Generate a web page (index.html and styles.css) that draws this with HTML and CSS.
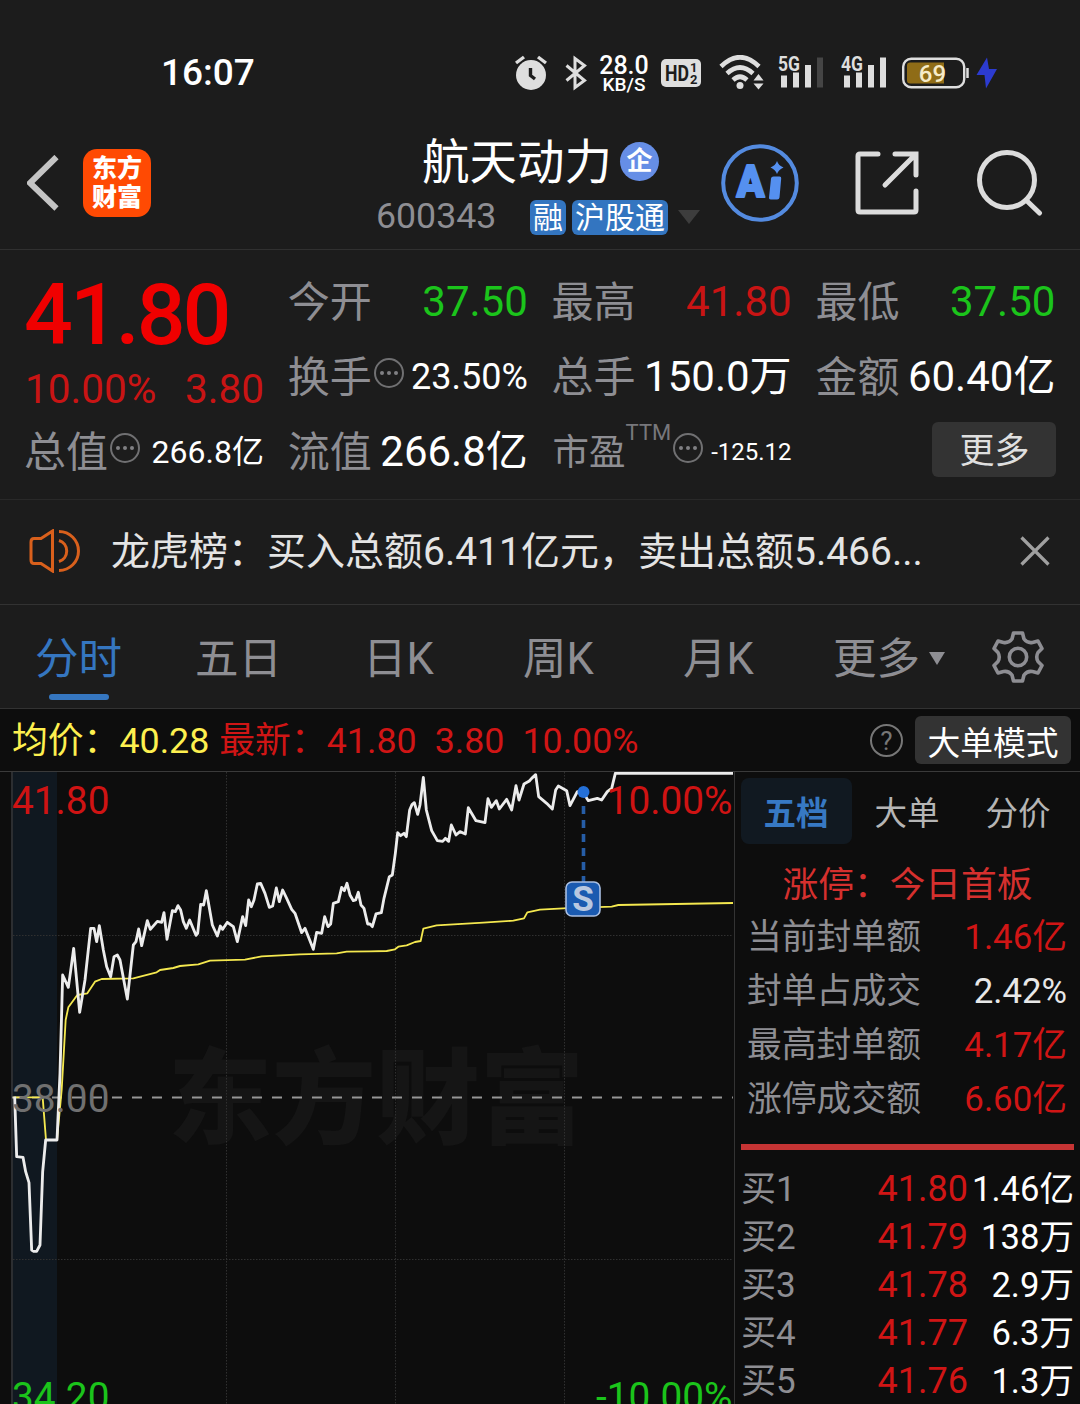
FILE: index.html
```html
<!DOCTYPE html>
<html lang="zh-CN">
<head>
  <meta charset="UTF-8" />
  <meta name="viewport" content="width=device-width, initial-scale=1.0" />
  <title>航天动力 600343</title>
  <link rel="stylesheet" href="styles.css">
</head>
<body>
  <div class="status-bar">
    <span class="time">16:07</span>
    <div class="status-icons">
      <svg class="alarm" width="32" height="36" viewBox="0 0 32 36">
        <circle cx="16" cy="20" r="15" fill="#dedede"/>
        <path d="M1 8 9 2M31 8 23 2" stroke="#dedede" stroke-width="3.4"/>
        <path d="M15.500 13v7.500l4.500 3.500" fill="none" stroke="#1c1c1c" stroke-width="3.400"/>
      </svg>
      <svg class="bluetooth" width="22" height="36" viewBox="0 0 22 36">
        <path d="M1.500 10.500 19.500 25.500 10 32.500V3.500l9.500 7L1.500 25.500" fill="none" stroke="#dedede" stroke-width="3"/>
      </svg>
      <div class="speed"><span>28.0</span><span class="unit">KB/S</span></div>
      <svg class="hd" width="40" height="28" viewBox="0 0 40 28">
        <rect width="40" height="28" rx="5" fill="#dedede"/>
        <text x="4" y="22" font-size="22" textLength="24" lengthAdjust="spacingAndGlyphs">HD</text>
        <text x="29" y="13" font-size="13">1</text>
        <text x="29" y="25" font-size="13">2</text>
      </svg>
      <svg class="wifi" width="46" height="36" viewBox="0 0 46 36">
        <g fill="none" stroke="#dedede" stroke-width="4.600">
          <path d="M2 11.500Q21 -7 40 11.500"/>
          <path d="M8 18.500Q21 6.500 34 18.500"/>
          <path d="M14 25Q21 18.500 28 25"/>
        </g>
        <circle cx="21" cy="30.500" r="3.500" fill="#dedede"/>
        <path d="M34.500 25.500 39.500 19l5 6.500zM34.500 28.500h10l-5 6z" fill="#dedede"/>
      </svg>
      <svg class="signal" width="48" height="36" viewBox="0 0 48 36">
        <text x="1" y="15.500" textLength="22" lengthAdjust="spacingAndGlyphs">5G</text>
        <path d="M4 20.500h6v12H4zM16 17.500h6v15h-6zM28 10h6v22.500h-6z" fill="#dedede"/>
        <path d="M40 2.500h6v30h-6z" fill="#454545"/>
      </svg>
      <svg class="signal" width="48" height="36" viewBox="0 0 48 36">
        <text x="1" y="15.500" textLength="22" lengthAdjust="spacingAndGlyphs">4G</text>
        <path d="M4 20.500h6v12H4zM16 17.500h6v15h-6zM28 10h6v22.500h-6zM40 2.500h6v30h-6z" fill="#dedede"/>
      </svg>
      <svg class="battery" width="95" height="36" viewBox="0 0 95 36">
        <rect x="1.200" y="3.700" width="61" height="28.600" rx="8" fill="none" stroke="#dedede" stroke-width="2.400"/>
        <path d="M8 7.500h34v21H8q-3 0-3-3v-15q0-3 3-3z" fill="#8f6c17"/>
        <path d="M65.500 13v10" stroke="#dedede" stroke-width="2.500"/>
        <text x="30.500" y="26.500" text-anchor="middle">69</text>
        <path d="M85 2.500 74.500 20h8L84 33.500 95 14h-8z" fill="#2c3bd0"/>
      </svg>
    </div>
  </div>

  <div class="header">
    <svg class="back" width="32" height="56" viewBox="0 0 32 56">
      <path d="M29.500 2 3 28l26.500 25.500" fill="none" stroke="#c4c4c4" stroke-width="6"/>
    </svg>
    <div class="logo"><span>东方</span><span>财富</span></div>
    <div class="title">
      <div class="name"><span>航天动力</span><span class="badge">企</span></div>
      <div class="code">
        <span class="number">600343</span>
        <span class="tag">融</span>
        <span class="tag">沪股通</span>
        <i class="caret"></i>
      </div>
    </div>
    <svg class="ai" width="78" height="78" viewBox="0 0 78 78">
      <circle cx="39" cy="39" r="36.800" fill="none" stroke="#548be0" stroke-width="4"/>
      <text x="15.500" y="52.500" class="ai-a" textLength="28" lengthAdjust="spacingAndGlyphs">A</text>
      <path d="M50 34.500q.3-2 2.500-2h6q2 0 1.700 2l-1.700 19q-.3 2-2.300 2h-6.500q-2 0-1.700-2z" fill="#5590f0"/>
      <path d="M56 17q1.500 4.500 6.500 6.500-5 2-6.500 6.500-1.500-4.500-6.500-6.500 5-2 6.500-6.500z" fill="#5590f0"/>
    </svg>
    <svg class="share" width="64" height="64" viewBox="0 0 64 64">
      <path d="M23 3H5Q3 3 3 5v54q0 2 2 2h54q2 0 2-2V40M40 3h21v21M60 4 30 34" fill="none" stroke="#dcdcdc" stroke-width="5" stroke-linecap="round"/>
    </svg>
    <svg class="search" width="66" height="66" viewBox="0 0 66 66">
      <circle cx="30" cy="30" r="27.500" fill="none" stroke="#dcdcdc" stroke-width="5"/>
      <path d="M49 50 62.500 63" stroke="#dcdcdc" stroke-width="5" stroke-linecap="round"/>
    </svg>
  </div>

  <div class="quote">
    <div class="price">
      <div class="last">41.80</div>
      <div class="change"><span>10.00%</span><span>3.80</span></div>
    </div>
    <div class="item"><span class="label">今开</span><span class="green">37.50</span></div>
    <div class="item"><span class="label">最高</span><span class="red">41.80</span></div>
    <div class="item"><span class="label">最低</span><span class="green">37.50</span></div>
    <div class="item"><span class="label">换手</span><i class="dots"></i><span class="value mid">23.50%</span></div>
    <div class="item"><span class="label">总手</span><span class="value">150.0万</span></div>
    <div class="item"><span class="label">金额</span><span class="value">60.40亿</span></div>
    <div class="item"><span class="label">总值</span><i class="dots"></i><span class="value small">266.8亿</span></div>
    <div class="item"><span class="label">流值</span><span class="value">266.8亿</span></div>
    <div class="item"><span class="label pe">市盈</span><span class="ttm">TTM</span><i class="dots"></i><span class="value tiny">-125.12</span></div>
    <div class="item"><button class="more">更多</button></div>
  </div>

  <div class="news">
    <svg class="horn" width="52" height="44" viewBox="0 0 52 44">
      <path d="M23.500 2v40L12 34.500H5Q2 34.500 2 31V13q0-3.500 3-3.500h7zM30 2.500a19.500 19.500 0 0 1 0 39M30 11.500a11 11 0 0 1 0 21" fill="none" stroke="#d9601c" stroke-width="3"/>
    </svg>
    <span class="news-text">龙虎榜：买入总额6.411亿元，卖出总额5.466...</span>
    <svg class="close" width="30" height="30" viewBox="0 0 30 30">
      <path d="M1.500 1.500l27 27M28.500 1.500l-27 27" stroke="#a0a0a0" stroke-width="3.200"/>
    </svg>
  </div>

  <div class="tabs">
    <span class="tab active">分时</span>
    <span class="tab">五日</span>
    <span class="tab">日K</span>
    <span class="tab">周K</span>
    <span class="tab">月K</span>
    <span class="tab tab-more">更多<i></i></span>
    <svg class="gear" width="52" height="52" viewBox="0 0 52 52">
      <path d="M21.500 2h9l1.500 6q3.500 4.500 8.500 3.500l5.500-1.500L50 17.500l-4 4q-2.500 4.500 0 9l4 4-4 7.500-5.500-1.500q-5-1-8.500 3.500l-1.500 6h-9l-1.500-6q-3.500-4.500-8.500-3.500L6 42l-4-7.500 4-4q2.500-4.500 0-9l-4-4L6 10l5.500 1.500q5 1 8.500-3.500z" fill="none" stroke="#8e8e93" stroke-width="3.600" stroke-linejoin="round"/>
      <circle cx="26" cy="26" r="8.700" fill="none" stroke="#8e8e93" stroke-width="3.600"/>
    </svg>
  </div>

  <div class="info">
    <span class="avg">均价：40.28</span>
    <span class="now">最新：41.80</span>
    <span class="now">3.80</span>
    <span class="now">10.00%</span>
    <span class="help">?</span>
    <button class="mode">大单模式</button>
  </div>

  <div class="main">
    <svg class="chart" width="735" height="632" viewBox="0 772 735 632">
      <rect x="13" y="772" width="44" height="632" fill="#101820"/>
      <text class="watermark" x="168" y="1136" textLength="416">东方财富</text>
      <g class="grid">
        <path d="M226.500 772v632M395.500 772v632M564.500 772v632M13 935.500h720M13 1259.500h720"/>
      </g>
      <path d="M12 772v632" stroke="#2c2e31" stroke-width="2"/>
      <path d="M734.500 772v632" stroke="#333"/>
      <path d="M12 1097.500h721" stroke="#969696" stroke-width="2" stroke-dasharray="10 10"/>
      <!-- lines are plotted at 3x -->
      <g transform="translate(0 770) scale(0.33333)" fill="none" stroke-linejoin="round">
        <polyline stroke="#f4e84f" stroke-width="5.500" points="40,982 128,982 138,1110 171,1110 185,960 197,750 205,712 232,675 262,670 285,635 305,627 400,625 470,607 480,600 500,597 520,594 540,588 595,583 630,572 735,569 785,559 900,553 1010,550 1040,545 1110,544 1160,543 1185,538 1195,530 1220,526 1245,516 1262,513 1270,476 1310,466 1450,458 1540,452 1572,445 1582,427 1620,419 1690,415 1835,410 1855,405 2199,399"/>
        <polyline stroke="#ececec" stroke-width="8.500" points="44,980 50,1160 69,1162 77,1205 87,1238 95,1440 101,1444 110,1444 120,1425 128,1205 137,1110 171,1110 180,910 188,615 205,652 213,595 221,535 239,727 255,630 272,475 282,475 290,515 298,467 310,540 320,590 332,620 342,560 352,555 360,570 382,687 400,525 408,515 416,477 425,527 442,452 451,478 472,454 485,457 492,428 501,508 517,422 526,425 534,407 542,420 550,455 559,475 569,450 588,496 593,490 602,403 611,405 619,362 637,465 652,498 661,468 668,478 682,457 700,470 712,515 728,440 737,467 746,390 754,410 762,390 772,342 782,340 795,370 808,412 818,408 829,354 838,395 848,360 860,385 875,418 885,430 905,488 915,475 940,538 950,487 965,490 974,440 984,470 992,462 1000,400 1015,395 1025,352 1033,362 1041,340 1050,375 1060,392 1067,390 1075,367 1083,405 1092,415 1103,462 1110,462 1117,470 1128,432 1144,428 1152,385 1168,320 1177,315 1186,250 1193,188 1202,197 1212,190 1219,200 1229,120 1236,104 1243,98 1253,133 1260,105 1270,22 1279,120 1295,182 1312,212 1328,214 1336,205 1346,214 1354,165 1368,195 1380,185 1396,192 1405,113 1428,152 1455,158 1464,86 1474,112 1489,92 1498,117 1520,88 1535,120 1548,47 1557,90 1572,42 1588,33 1595,25 1607,14 1616,80 1640,100 1657,117 1667,60 1675,48 1700,62 1710,107 1732,65 1750,68 1765,92 1792,85 1805,90 1822,65 1835,55 1846,10 2199,10"/>
      </g>
      <path d="M583.500 806v76" stroke="#265da6" stroke-width="3.600" stroke-dasharray="8 6"/>
      <circle cx="583.500" cy="792" r="6" fill="#2470d8"/>
      <rect x="566" y="882" width="34" height="34" rx="6" fill="#1a5ab0" stroke="#a9bfe2" stroke-width="1.600"/>
      <text class="sell" x="583" y="911" text-anchor="middle">S</text>
      <text class="axis up" x="12" y="814">41.80</text>
      <text class="axis up" x="732.500" y="814" text-anchor="end">10.00%</text>
      <text class="axis flat" x="12" y="1112">38.00</text>
      <text class="axis down" x="12" y="1410">34.20</text>
      <text class="axis down" x="732.500" y="1410" text-anchor="end">-10.00%</text>
    </svg>

    <div class="panel">
      <div class="panel-tabs">
        <span class="active">五档</span>
        <span>大单</span>
        <span>分价</span>
      </div>
      <div class="limit">涨停：今日首板</div>
      <div class="seal"><span>当前封单额</span><b>1.46亿</b></div>
      <div class="seal"><span>封单占成交</span><b class="white">2.42%</b></div>
      <div class="seal"><span>最高封单额</span><b>4.17亿</b></div>
      <div class="seal"><span>涨停成交额</span><b>6.60亿</b></div>
      <div class="divider"></div>
      <div class="bid"><span>买1</span><b>41.80</b><em>1.46亿</em></div>
      <div class="bid"><span>买2</span><b>41.79</b><em>138万</em></div>
      <div class="bid"><span>买3</span><b>41.78</b><em>2.9万</em></div>
      <div class="bid"><span>买4</span><b>41.77</b><em>6.3万</em></div>
      <div class="bid"><span>买5</span><b>41.76</b><em>1.3万</em></div>
    </div>
  </div>
</body>
</html>
```
FILE: styles.css
```css
* {
  box-sizing: border-box;
}
body {
  margin: 0;
  width: 1080px;
  height: 1404px;
  overflow: hidden;
  background: #1c1c1c;
  color: #fff;
  font-family: Roboto, "Noto Sans CJK SC", sans-serif;
  line-height: 1;
  white-space: nowrap;
}
i, em, b {
  font-style: normal;
  font-weight: normal;
}
svg {
  display: block;
  flex: none;
}
button {
  border: 0;
  padding: 0;
  color: #fff;
  background: #333;
  font-family: inherit;
}

/* status bar */
.status-bar {
  display: flex;
  align-items: center;
  height: 116px;
  padding: 29px 83px 0 161px;
}
.time {
  width: 354px;
  font-size: 37px;
  font-weight: 500;
}
.status-icons {
  display: flex;
  align-items: center;
}
.bluetooth {
  margin-left: 18px;
}
.speed {
  display: flex;
  flex-direction: column;
  align-items: center;
  width: 52px;
  margin-left: 11px;
  padding-top: 2px;
  font-size: 25px;
  font-weight: 500;
  line-height: 21px;
}
.speed .unit {
  font-size: 19px;
  line-height: 17px;
}
.hd {
  margin-left: 11px;
}
.hd text {
  fill: #1c1c1c;
  font-weight: 700;
}
.wifi {
  margin-left: 18px;
}
.signal {
  margin-left: 12px;
}
.signal + .signal {
  margin-left: 15px;
}
.signal text {
  fill: #dedede;
  font-size: 20px;
  font-weight: 700;
}
.battery {
  margin-left: 14px;
}
.battery text {
  fill: #f6ebc8;
  font-size: 24px;
  font-weight: 500;
}

/* header */
.header {
  display: flex;
  align-items: center;
  height: 134px;
  padding-left: 27px;
  border-bottom: 1px solid #303030;
}
.logo {
  display: flex;
  flex-direction: column;
  align-items: center;
  justify-content: center;
  width: 68px;
  height: 68px;
  margin-left: 24px;
  border-radius: 14px;
  background: #ff4a03;
  font-size: 25px;
  font-weight: 800;
  line-height: 29px;
}
.title {
  width: 324px;
  margin-left: 225px;
  padding-top: 11px;
}
.name {
  display: flex;
  align-items: center;
  height: 58px;
  padding-left: 46px;
  font-size: 47.500px;
}
.name span:first-child {
  padding-top: 5px;
}
.badge {
  width: 39px;
  height: 39px;
  margin-left: 8px;
  border-radius: 50%;
  background: #668ee6;
  font-size: 26px;
  font-weight: 700;
  line-height: 38px;
  text-align: center;
}
.code {
  display: flex;
  align-items: center;
  height: 54px;
}
.number {
  width: 154px;
  color: #8e8e93;
  font-size: 35.700px;
}
.tag {
  height: 35px;
  margin-right: 6px;
  padding: 0 3px;
  border-radius: 6px;
  background: #3375c0;
  font-size: 30px;
  line-height: 36px;
}
.caret {
  margin-left: 4px;
  border: 11px solid transparent;
  border-top: 14px solid #3d3d3d;
  border-bottom: 0;
}
.ai {
  margin-left: 21px;
}
.ai-a {
  fill: #5590f0;
  stroke: #5590f0;
  stroke-width: 2px;
  stroke-linejoin: round;
  font-size: 44px;
  font-weight: 900;
}
.share {
  margin-left: 56px;
}
.search {
  margin-left: 58px;
}

/* quote */
.quote {
  display: grid;
  grid-template-columns: repeat(4, 239px);
  grid-template-rows: repeat(3, 75px);
  column-gap: 24.800px;
  height: 250px;
  padding: 14px 0 0 25px;
  border-bottom: 1px solid #292929;
}
.price {
  grid-row: span 2;
  color: #f00000;
}
.last {
  height: 102px;
  margin-left: -1px;
  font-size: 86px;
  font-weight: 500;
  letter-spacing: -3px;
  line-height: 102px;
}
.change {
  display: flex;
  justify-content: space-between;
  color: #c91414;
  font-size: 40.500px;
  line-height: 47px;
}
.item {
  display: flex;
  align-items: center;
  font-size: 42px;
}
.item > span:last-child {
  margin-left: auto;
}
.label {
  margin-left: -1px;
  padding-top: 3px;
  color: #8e8e93;
}
.green {
  color: #1bc41b;
}
.red {
  color: #c91414;
}
.value {
  padding-top: 1px;
}
.value.mid {
  font-size: 36px;
}
.value.small {
  font-size: 32px;
}
.value.tiny {
  padding: 0;
  font-size: 24px;
}
.label.pe {
  margin-left: 0;
  font-size: 36.500px;
}
.ttm {
  align-self: flex-start;
  margin-top: 8px;
  color: #77777b;
  font-size: 22px;
}
.dots {
  position: relative;
  width: 30px;
  height: 30px;
  margin: -8px 0 0 2px;
  border: 2px solid #707072;
  border-radius: 50%;
}
.dots::after {
  content: "";
  position: absolute;
  left: 11px;
  top: 11px;
  width: 4px;
  height: 4px;
  border-radius: 50%;
  background: #808083;
  box-shadow: -7px 0 #808083, 7px 0 #808083;
}
.more {
  width: 124px;
  height: 55px;
  margin: -5px -1px 0 auto;
  padding-bottom: 4px;
  border-radius: 6px;
  color: #dfdfdf;
  font-size: 35px;
}

/* news */
.news {
  display: flex;
  align-items: center;
  height: 105px;
  padding: 0 30px 2px 29px;
  border-bottom: 1px solid #323232;
}
.news-text {
  margin-left: 30px;
  padding-top: 2px;
  color: #e4e4e4;
  font-size: 39px;
}
.close {
  margin-left: auto;
}

/* tabs */
.tabs {
  display: flex;
  align-items: center;
  height: 104px;
  border-bottom: 1px solid #323232;
}
.tab {
  position: relative;
  width: 160px;
  height: 103px;
  padding-right: 3px;
  color: #8e8e93;
  font-size: 43.500px;
  line-height: 110px;
  text-align: center;
}
.tab.active {
  color: #3576c0;
}
.tab.active::after {
  content: "";
  position: absolute;
  left: 49px;
  bottom: 8px;
  width: 60px;
  height: 6px;
  border-radius: 3px;
  background: #3576c0;
}
.tab-more {
  padding: 0 0 0 33px;
  text-align: left;
}
.tab-more i {
  display: inline-block;
  margin-left: 9px;
  border: 8px solid transparent;
  border-top: 13px solid #8e8e93;
  border-bottom: 0;
  vertical-align: 9px;
}
.gear {
  margin-left: 32px;
}

/* info line */
.info {
  display: flex;
  align-items: center;
  height: 63px;
  padding: 0 9px 0 12px;
  border-bottom: 1px solid #3a3a3a;
  background: #0d0d0d;
  font-size: 35.800px;
}
.avg, .now {
  padding-top: 3px;
}
.avg {
  margin-right: 10px;
  color: #fdf04f;
}
.now {
  margin-right: 18px;
  color: #d01515;
}
.help {
  width: 33px;
  height: 33px;
  margin-left: auto;
  border: 2px solid #777;
  border-radius: 50%;
  color: #777;
  font-size: 26px;
  line-height: 30px;
  text-align: center;
}
.mode {
  width: 156px;
  height: 48px;
  margin-left: 12px;
  border-radius: 6px;
  font-size: 32.800px;
}

/* chart */
.main {
  display: flex;
  height: 632px;
  background: #0d0d0d;
}
.grid path {
  fill: none;
  stroke: #303030;
  stroke-dasharray: 1.500 1.500;
}
.watermark {
  fill: #151515;
  font-size: 104px;
  font-weight: 900;
}
.axis {
  font-size: 38.800px;
}
.up {
  fill: #cf1313;
}
.flat {
  fill: #707070;
}
.down {
  fill: #1bc41b;
}
.sell {
  fill: #b9c8e0;
  font-size: 35px;
  font-weight: 700;
}

/* order panel */
.panel {
  flex: 1;
  padding: 6px 6px 0;
}
.panel-tabs {
  display: flex;
}
.panel-tabs span {
  width: 111px;
  height: 66px;
  padding-right: 1px;
  color: #b5b5b5;
  font-size: 32.500px;
  line-height: 72px;
  text-align: center;
}
.panel-tabs .active {
  border-radius: 8px;
  background: #111921;
  color: #3779c4;
  font-weight: 700;
}
.limit {
  height: 66px;
  color: #d5302e;
  font-size: 35.700px;
  line-height: 82px;
  text-align: center;
}
.seal {
  display: flex;
  justify-content: space-between;
  height: 54px;
  padding: 0 7px 0 6px;
  color: #8e8e93;
  font-size: 34.800px;
  line-height: 54px;
}
.seal b {
  color: #d01515;
}
.seal b.white {
  color: #e8e8e8;
}
.divider {
  height: 6px;
  margin: 18px 0 14px;
  background: #c63434;
}
.bid {
  display: flex;
  height: 48.100px;
  color: #8e8e93;
  font-size: 35px;
  line-height: 52px;
}
.bid b {
  width: 172px;
  color: #d01515;
  font-size: 36px;
  line-height: 50px;
  text-align: right;
}
.bid span {
  width: 55px;
}
.bid em {
  flex: 1;
  color: #fff;
  font-size: 34.600px;
  line-height: 50px;
  text-align: right;
}
```
